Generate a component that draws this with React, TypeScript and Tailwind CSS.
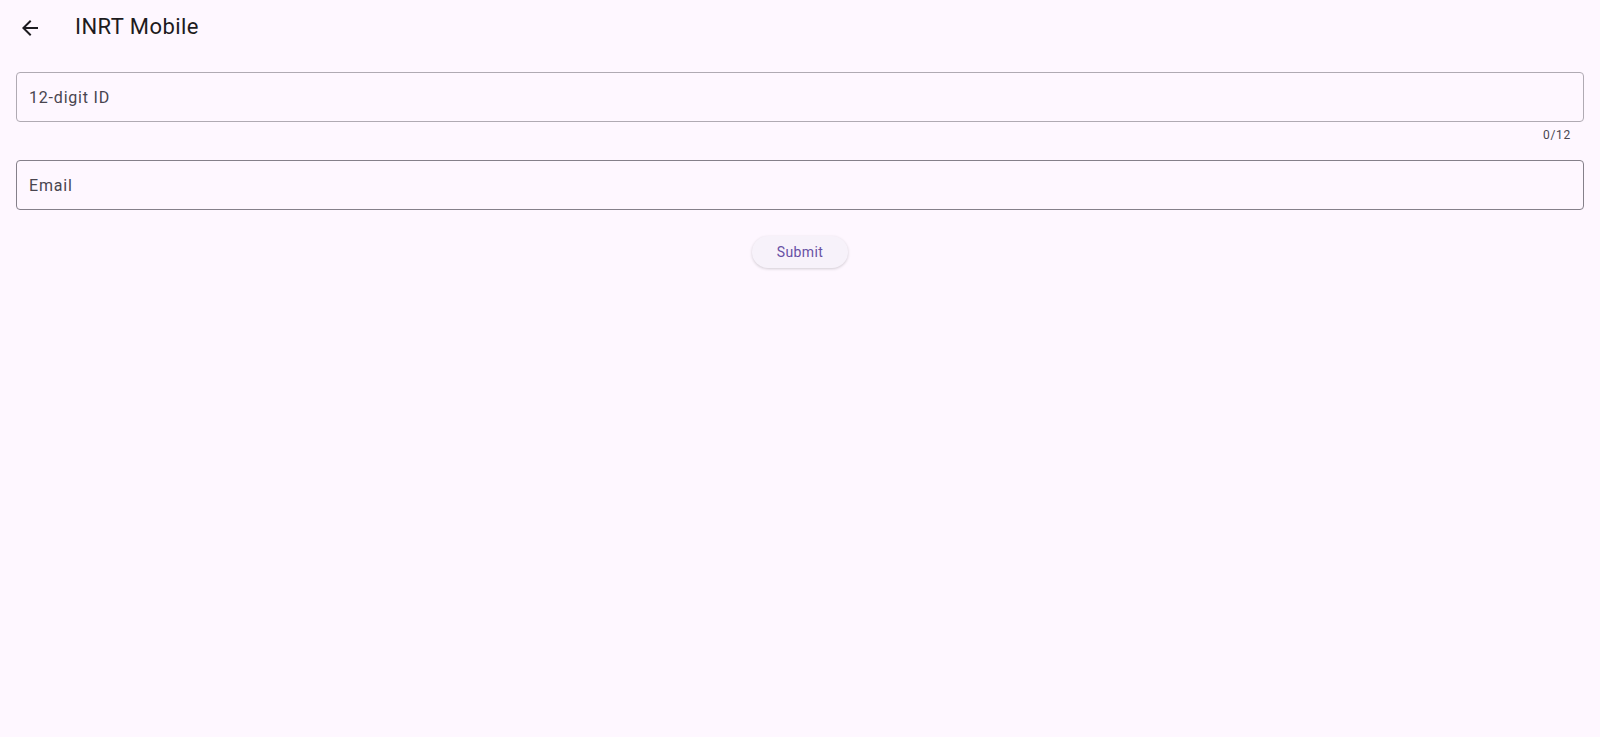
import { useState } from "react";

const BackIcon = () => (
  <svg viewBox="0 0 24 24" className="w-6 h-6" fill="#1d1b20">
    <path d="M20 11H7.83l5.59-5.59L12 4l-8 8 8 8 1.41-1.41L7.83 13H20v-2z" />
  </svg>
);

const App = () => {
  const [id, setId] = useState("");
  const [email, setEmail] = useState("");

  return (
    <div
      className="min-h-screen bg-[#fef7ff] text-[#1d1b20]"
      style={{ fontFamily: "Roboto, 'Noto Sans', sans-serif" }}
    >
      <header className="h-14 flex items-center">
        <button className="w-14 h-14 flex items-center justify-center pl-[3px]">
          <BackIcon />
        </button>
        <h1 className="ml-[19px] text-[22px] leading-7 tracking-[0.45px] text-[#1d1b20] -mt-[3px]">
          INRT Mobile
        </h1>
      </header>

      <div className="px-4 pt-4">
        <input
          value={id}
          maxLength={12}
          onChange={(e) => setId(e.target.value)}
          placeholder="12-digit ID"
          className="block w-full h-[50px] px-3 rounded border border-[#b0aab3] bg-transparent text-base tracking-[0.8px] text-[#49454f] placeholder:text-[#49454f] outline-none"
        />
        <div className="h-[22px] pt-[5px] pr-[13px] text-right text-xs leading-4 tracking-[0.7px] text-[#49454f]">
          {id.length}/12
        </div>

        <input
          value={email}
          onChange={(e) => setEmail(e.target.value)}
          placeholder="Email"
          className="mt-4 block w-full h-[50px] px-3 rounded border border-[#85808a] bg-transparent text-base tracking-[0.8px] text-[#49454f] placeholder:text-[#49454f] outline-none"
        />

        <div className="flex justify-center pt-[26px]">
          <button className="h-8 w-24 rounded-full bg-[#f7f2fa] text-sm tracking-[0.35px] text-[#6750a4] shadow-[0_1px_3px_rgba(0,0,0,0.18)]">
            Submit
          </button>
        </div>
      </div>
    </div>
  );
};

export default App;
